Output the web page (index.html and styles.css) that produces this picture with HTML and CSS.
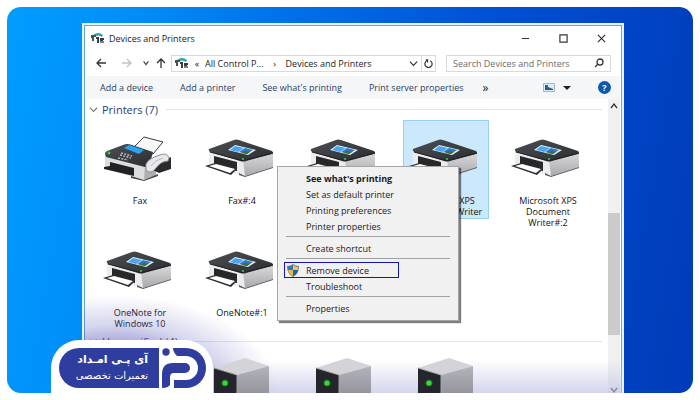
FILE: index.html
```html
<!DOCTYPE html>
<html lang="en">
<head>
<meta charset="utf-8">
<title>Devices and Printers</title>
<link rel="stylesheet" href="styles.css">
</head>
<body>
<svg class="defs" aria-hidden="true">
  <defs>
    <linearGradient id="side" x1="0" y1="0" x2="0" y2="1"><stop offset="0" stop-color="#dcdcde"/><stop offset="1" stop-color="#a9a9ad"/></linearGradient>
    <linearGradient id="lid" x1="0" y1="0" x2="1" y2="1"><stop offset="0" stop-color="#4b4f53"/><stop offset="1" stop-color="#2b2e31"/></linearGradient>
    <linearGradient id="metal" x1="0" y1="0" x2="0" y2="1"><stop offset="0" stop-color="#b4b4bc"/><stop offset="1" stop-color="#85858f"/></linearGradient>
    <symbol id="printer" viewBox="0 0 74 46">
      <path d="M4 15 38 24 68 17V31L40 40 4 30Z" fill="#ececee"/>
      <path d="M38 24 68 16V31L40 40Z" fill="url(#side)"/>
      <path d="M34 37 40 40 68 31V32L40 41 34 39Z" fill="#55575a"/>
      <path d="M9 20 32 26V35L9 30Z" fill="#26282a"/>
      <path d="M0 30 10 27 32 33 26 39Z" fill="#2c2e30"/>
      <path d="M4 30 11 28 30 33 25 37Z" fill="#fff"/>
      <path d="M4 13 29 4Q31 3 34 4L67 15Q69 17 67 18L41 25Q38 26 35 25L5 16Q3 14 4 13Z" fill="url(#lid)"/>
      <path d="M5 16 35 24Q38 25 41 24L68 17" fill="none" stroke="#1d1f21"/>
      <path d="M23 14 30 9 51 14 43 19Z" fill="#e6f4fd"/>
      <path d="M25 14 30 10 39 12 33 16Z" fill="#4ba5ec"/>
      <path d="M34 16 40 12 48 14 42 18Z" fill="#2e78c8"/>
      <path d="M36 17 40 15 45 16 42 18Z" fill="#3b713a"/>
      <circle cx="38" cy="23" r="1" fill="#2bd744"/>
    </symbol>
    <symbol id="fax" viewBox="0 0 74 46">
      <path d="M30 12 41 1 60 6 50 18Z" fill="#f7f7f8" stroke="#3c3e40"/>
      <path d="M2 20 42 30 52 27V39L41 44 2 33Z" fill="#dddde0"/>
      <path d="M42 29 53 25V39L41 44Z" fill="#adafb3"/>
      <path d="M7 26 31 32V40L1 33 1 31 7 30Z" fill="#202225"/>
      <path d="M28 40 41 44 55 38V40L41 45 28 42Z" fill="#45474a"/>
      <path d="M2 18Q2 16 4 15L20 9Q24 7 29 9L50 16 47 27 42 31 3 21Z" fill="url(#lid)"/>
      <path d="M21 12 26 9 41 14 36 18Z" fill="#27a4f2"/>
      <path d="M18 17 29 20M17 19 28 22M15 22 25 24" stroke="#b9bcc0" stroke-width="1.4" stroke-dasharray="2 1.3"/>
      <path d="M50 34 52 28 68 21V33L56 37Z" fill="#292b2e"/>
      <path d="M43 28Q46 22 57 19Q64 16 66 22L65 25Q58 25 53 32Q48 39 43 34Z" fill="#e9e9eb" stroke="#8f9195"/>
      <path d="M48 30Q52 24 60 22" fill="none" stroke="#b8babd"/>
      <circle cx="6" cy="17" r="1.4" fill="#2bd744"/>
    </symbol>
    <symbol id="tower" viewBox="0 0 74 48">
      <path d="M9 10 40 0 64 8 32 17Z" fill="#d3d3d8"/>
      <path d="M32 17 64 8V48H32Z" fill="url(#metal)"/>
      <path d="M9 10 32 17V48H9Z" fill="#24262b"/>
      <path d="M9 10 32 17V48" fill="none" stroke="#a3a3ac"/>
      <circle cx="20" cy="25" r="3.600" fill="#17661f"/>
      <circle cx="20" cy="25" r="2.600" fill="#3ad83d"/>
    </symbol>
    <symbol id="cp" viewBox="0 0 14 12">
      <path d="M2 3Q7-1 12 3L11 5Q7 2 3 5Z" fill="#2ba3ab"/>
      <path d="M0 3H5V5H3V9H1V6H0Z" fill="#4a5157"/>
      <path d="M5 5H8V11H6V7H5ZM9 6H13V8H12V11H9Z" fill="#383d42"/>
      <path d="M9 9H13V11H9Z" fill="#7b8086"/>
    </symbol>
  </defs>
</svg>

<main class="desktop">
  <section class="window">
    <header class="titlebar">
      <svg class="cp"><use href="#cp"/></svg>
      <h1>Devices and Printers</h1>
      <button class="caption" aria-label="Minimize"><svg viewBox="0 0 10 10"><path d="M1 5H9"/></svg></button>
      <button class="caption" aria-label="Maximize"><svg viewBox="0 0 10 10"><path d="M1 1H9V9H1Z"/></svg></button>
      <button class="caption" aria-label="Close"><svg viewBox="0 0 10 10"><path d="M1 1 9 9M9 1 1 9"/></svg></button>
    </header>

    <nav class="navbar">
      <button class="nav-btn" aria-label="Back"><svg viewBox="0 0 10 10"><path d="M10 5H1M5 1 1 5 5 9"/></svg></button>
      <button class="nav-btn faint" aria-label="Forward"><svg viewBox="0 0 10 10"><path d="M0 5H9M5 1 9 5 5 9"/></svg></button>
      <button class="nav-btn small" aria-label="Recent"><svg viewBox="0 0 10 10"><path d="M2 3 5 7 8 3"/></svg></button>
      <button class="nav-btn up" aria-label="Up"><svg viewBox="0 0 10 10"><path d="M5 10V1M1 5 5 1 9 5"/></svg></button>
      <div class="address">
        <svg class="cp"><use href="#cp"/></svg>
        <span class="sep">«</span>
        <a href="#">All Control P...</a>
        <span class="sep wide">›</span>
        <a href="#">Devices and Printers</a>
        <button class="drop" aria-label="Previous locations"><svg viewBox="0 0 10 10"><path d="M1 3 5 7 9 3"/></svg></button>
        <button class="refresh" aria-label="Refresh"><svg viewBox="0 0 10 10"><path d="M7 2A4 4 0 1 1 3 2M2 1H4V4"/></svg></button>
      </div>
      <label class="search">
        <input type="text" placeholder="Search Devices and Printers" aria-label="Search Devices and Printers">
        <svg viewBox="0 0 10 10"><circle cx="6" cy="4" r="3"/><path d="M4 6 1 9"/></svg>
      </label>
    </nav>

    <div class="toolbar">
      <button>Add a device</button>
      <button>Add a printer</button>
      <button>See what's printing</button>
      <button>Print server properties</button>
      <button class="more" aria-label="More">»</button>
      <button class="view" aria-label="Change view"><svg viewBox="0 0 20 10" class="view-icon"><path d="M.5 .5H11.500V8.500H.5Z" fill="#d9edf9" stroke="#a9b6c0"/><path d="M2 5 5 4 10 6V7H2Z" fill="#265a8f"/><path d="M2 2H5V5H2Z" fill="#3b5f83"/></svg><span class="caret"></span></button>
      <button class="help" aria-label="Help">?</button>
    </div>

    <div class="content">
      <div class="list">
        <h2><svg viewBox="0 0 10 10"><path d="M1 3 5 7 9 3"/></svg>Printers (7)</h2>
        <ul class="tiles">
          <li><svg><use href="#fax"/></svg><span>Fax</span></li>
          <li><svg><use href="#printer"/></svg><span>Fax#:4</span></li>
          <li><svg><use href="#printer"/></svg></li>
          <li class="selected"><svg><use href="#printer"/></svg><span>Microsoft XPS Document Writer</span></li>
          <li><svg><use href="#printer"/></svg><span>Microsoft XPS Document Writer#:2</span></li>
          <li><svg><use href="#printer"/></svg><span>OneNote for Windows 10</span></li>
          <li><svg><use href="#printer"/></svg><span>OneNote#:1</span></li>
        </ul>
        <h2><svg viewBox="0 0 10 10"><path d="M1 3 5 7 9 3"/></svg>Unspecified (4)</h2>
        <ul class="tiles towers">
          <li><svg><use href="#tower"/></svg></li>
          <li><svg><use href="#tower"/></svg></li>
          <li><svg><use href="#tower"/></svg></li>
          <li><svg><use href="#tower"/></svg></li>
        </ul>
      </div>
      <div class="scrollbar" aria-hidden="true">
        <svg viewBox="0 0 10 10"><path d="M2 7 5 3 8 7"/></svg>
        <div class="track-top"></div>
        <div class="thumb"></div>
        <div class="track-bottom"></div>
        <svg viewBox="0 0 10 10"><path d="M2 3 5 7 8 3"/></svg>
      </div>
    </div>

    <div class="menu" role="menu">
      <button role="menuitem" class="default">See what's printing</button>
      <button role="menuitem">Set as default printer</button>
      <button role="menuitem">Printing preferences</button>
      <button role="menuitem">Printer properties</button>
      <hr>
      <button role="menuitem">Create shortcut</button>
      <hr>
      <button role="menuitem" class="marked"><svg viewBox="0 0 12 13"><path d="M6 0Q8 2 12 2Q12 10 6 13Q0 10 0 2Q4 2 6 0Z" fill="#6d7780"/><path d="M6 1V6H1V3Q4 3 6 1Z" fill="#2675cf"/><path d="M6 1Q8 3 11 3V6H6Z" fill="#f5c64a"/><path d="M1 6H6V12Q2 10 1 6Z" fill="#f0b93c"/><path d="M6 6H11Q10 10 6 12Z" fill="#1e5fb4"/></svg>Remove device</button>
      <button role="menuitem">Troubleshoot</button>
      <hr>
      <button role="menuitem">Properties</button>
    </div>
  </section>

  <aside class="brand" lang="fa">
    <div class="brand-text" dir="rtl">
      <strong>آی پـی امـداد</strong>
      <span>تعمیرات تخصصی</span>
    </div>
    <svg class="brand-mark" viewBox="0 0 44 40" aria-hidden="true">
      <circle cx="4" cy="4" r="3.700"/>
      <path d="M11 0Q11 4 15 8H24A12 12 0 0 1 24 32H12V40H24A20 20 0 0 0 24 0Z"/>
      <path d="M0 40V26Q0 15 11 15H23A5 5 0 0 1 23 25H12Q8 25 8 29V37Q6 40 0 40Z"/>
    </svg>
  </aside>
</main>
</body>
</html>
```
FILE: styles.css
```css
* { box-sizing: border-box; }

body {
  margin: 0;
  padding: 7px;
  background: #fff;
  font: 9px/11px "Open Sans", "Noto Sans", sans-serif;
  color: #222;
}

button, input { font: inherit; color: inherit; border: 0; padding: 0; background: none; }
a { color: inherit; text-decoration: none; }
h1, h2, ul { margin: 0; padding: 0; font: inherit; }
svg { display: block; flex: none; }
.defs { position: absolute; width: 0; height: 0; }

.desktop {
  position: relative;
  display: flex;
  height: calc(100vh - 14px);
  padding: 16px 69px 0 75px;
  overflow: hidden;
  border-radius: 14px;
  background: linear-gradient(100deg, #009dff 0%, #0091fa 14%, #0070e8 38%, #0050d4 65%, #0042c2 88%, #003bb8 100%);
}

.window {
  position: relative;
  flex: 1;
  display: flex;
  flex-direction: column;
  min-width: 0;
  margin-bottom: -4px;
  border: 2px solid #e4f3fc;
  outline: 1px solid #5fa9d8;
  outline-offset: -3px;
  padding: 1px 2px 0;
  background: #fff;
}

/* lavender haze rising from the bottom edge and round the brand badge */
.window::after {
  content: "";
  position: absolute;
  inset: auto 0 0;
  height: 110px;
  background:
    linear-gradient(transparent 68%, rgba(190, 192, 228, .7)),
    radial-gradient(ellipse 165px 100px at 30px 100%, rgba(75, 75, 175, .65) 40%, rgba(90, 90, 190, .25) 70%, transparent);
  pointer-events: none;
}

.titlebar { display: flex; align-items: center; height: 24px; padding-left: 5px; }
.titlebar h1 { flex: 1; margin-left: 4px; }
.cp { width: 14px; height: 12px; }
.caption { width: 38px; height: 24px; display: grid; place-items: center; }
.caption svg { width: 9px; height: 9px; }
.caption path, .nav-btn path, .address button path, .search svg, h2 path, .scrollbar path {
  fill: none;
  stroke: #333;
  stroke-width: 1.3;
}

.navbar { display: flex; align-items: center; height: 26px; padding: 0 9px 0 3px; }
.nav-btn { width: 24px; }
.nav-btn svg { width: 10px; height: 10px; margin: auto; }
.nav-btn.faint { width: 28px; opacity: .3; }
.nav-btn.small { width: 10px; }
.nav-btn.small svg { width: 8px; height: 8px; }
.nav-btn.up { width: 20px; }

.address, .search { display: flex; align-items: center; height: 17px; border: 1px solid #d9d9d9; }
.address { flex: 1; padding-left: 3px; min-width: 0; white-space: nowrap; }
.address .sep { width: 16px; text-align: center; }
.address .wide { width: 22px; }
.address .drop { margin-left: auto; width: 16px; }
.address .refresh { width: 14px; height: 15px; border-left: 1px solid #d9d9d9; }
.address button svg { width: 9px; height: 9px; margin: auto; }
.search { flex: 0 1 165px; margin-left: 10px; padding: 0 6px; }
.search input { flex: 1; min-width: 0; outline: 0; }
.search input::placeholder { color: #6d6d6d; opacity: 1; }
.search svg { width: 10px; height: 10px; }

.toolbar {
  display: flex;
  align-items: center;
  gap: 27px;
  height: 23px;
  padding: 0 9px 0 14px;
  background: #f5f6f8;
  color: #2b3e60;
  white-space: nowrap;
}
.toolbar .more { margin-left: -8px; font-size: 12px; color: #222; }
.toolbar .view { display: flex; align-items: center; margin-left: auto; }
.view-icon { width: 20px; height: 10px; }
.caret { border: 4px solid transparent; border-top-color: #222; border-bottom: 0; }
.toolbar .help {
  width: 13px;
  height: 13px;
  border-radius: 50%;
  background: #0a58b5;
  color: #fff;
  font-weight: 700;
}

.content { flex: 1; display: flex; min-height: 0; }
.list { flex: 1; min-width: 0; overflow: hidden; padding-left: 3px; }
h2 {
  display: flex;
  align-items: center;
  gap: 4px;
  height: 21px;
  margin-right: 6px;
  font-size: 11px;
  color: #2d3c78;
}
h2 svg { width: 9px; height: 9px; }
h2 path { stroke: #777; }
h2::after { content: ""; flex: 1; height: 1px; margin-left: 4px; background: #e6e6ea; }

.tiles {
  display: grid;
  grid-template-columns: repeat(auto-fill, 86px);
  gap: 2px 16px;
  align-items: start;
  margin: 0 0 0 8px;
  list-style: none;
}
.tiles li { padding: 15px 4px 1px; border: 1px solid transparent; text-align: center; color: #111; }
.tiles svg { width: 74px; height: 46px; margin: 0 0 13px 1px; }
.tiles span { display: block; }
.tiles .selected { background: #cce8fd; border-color: #99d1f5; }
.towers { position: relative; z-index: 1; }
.towers li { padding-top: 5px; }
.towers svg { height: 48px; }

.scrollbar {
  display: flex;
  flex-direction: column;
  align-items: center;
  width: 12px;
  background: #f0f0f1;
}
.scrollbar svg { width: 10px; height: 10px; margin: 2px 0 0; }
.track-top { flex: 103; }
.thumb { flex: 123; width: 100%; background: #cbcacd; }
.track-bottom { flex: 48; }

.menu {
  position: absolute;
  left: 193px;
  top: 141px;
  width: 182px;
  padding: 3px 6px 4px;
  border: 1px solid #a5a5a5;
  background: #f1f1f1;
  box-shadow: 2px 2px 1px rgba(0, 0, 0, .5);
}
.menu button {
  display: block;
  width: 100%;
  height: 16px;
  padding-left: 22px;
  text-align: left;
  color: #1a1a1a;
  white-space: nowrap;
}
.menu .default { font-weight: 700; }
.menu hr { height: 1px; margin: 2px 2px 3px; border: 0; background: #a2a2a2; }
.menu .marked {
  display: flex;
  align-items: center;
  gap: 7px;
  width: 115px;
  padding-left: 2px;
  border: 1px solid #1313c0;
}
.marked svg { width: 12px; height: 13px; }

.brand {
  position: absolute;
  z-index: 2;
  left: 44px;
  bottom: 0;
  display: flex;
  gap: 3px;
  padding: 8px 7px 5px 8px;
  border-radius: 28px 28px 0 0;
  background: #fff;
}
.brand-text {
  display: flex;
  flex-direction: column;
  justify-content: center;
  align-items: flex-start;
  width: 100px;
  height: 40px;
  padding-right: 11px;
  border-radius: 20px 0 0 20px;
  background: #2f3e9e;
  color: #fff;
  font: 10px/16px "DejaVu Sans", sans-serif;
  white-space: nowrap;
}
.brand-text strong { font-size: 11px; }
.brand-mark { width: 44px; height: 40px; fill: #2f3e9e; }
```
